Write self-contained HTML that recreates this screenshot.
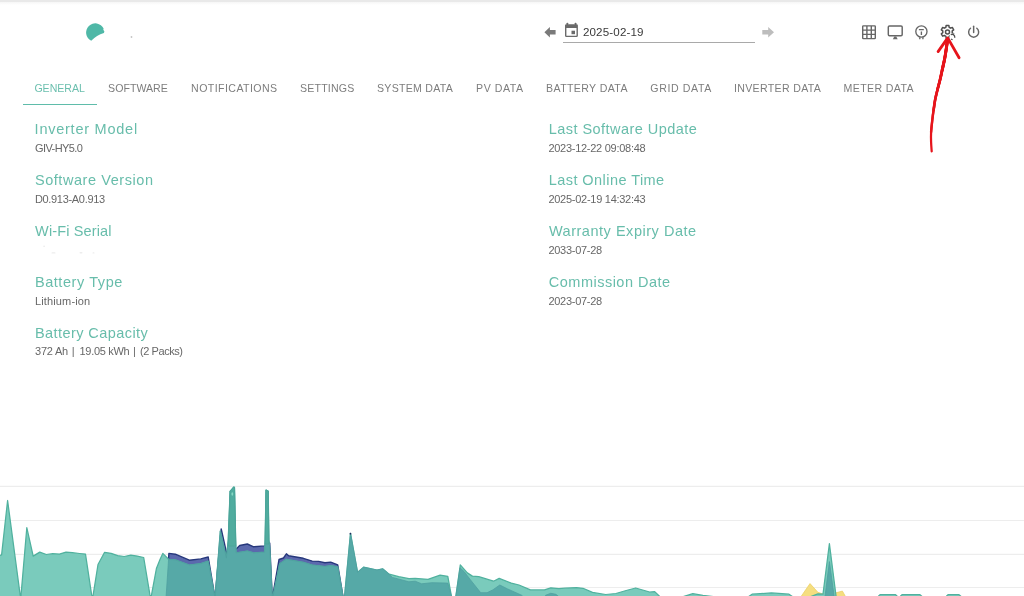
<!DOCTYPE html>
<html><head><meta charset="utf-8"><title>Inverter</title>
<style>
html,body{margin:0;padding:0;background:#fff;}
body{width:1024px;height:596px;position:relative;overflow:hidden;font-family:"Liberation Sans",sans-serif;}
.topbar{position:absolute;left:0;top:0;width:1024px;height:2px;background:#e9e9e9;}
.topbar2{position:absolute;left:0;top:2px;width:1024px;height:3px;background:linear-gradient(#f6f6f6,#fff);}
.t{position:absolute;white-space:pre;line-height:1;}
.txt{position:absolute;left:0;top:0;width:1024px;height:470px;will-change:transform;}
.tab{color:#7d7d7d;}
.tab.act{color:#6bbfae;}
.h{color:#68bdab;}
.v{color:#676767;}
.d{color:#3a3a3a;}
.uline{position:absolute;left:23px;top:103.6px;width:74.3px;height:1.8px;background:#5fbcaa;}
.dline{position:absolute;left:563px;top:42.2px;width:192px;height:1px;background:#a9a9a9;}
.chart{position:absolute;left:0;top:470px;}
.ov{position:absolute;left:0;top:0;}
</style></head><body>
<div class="topbar"></div><div class="topbar2"></div>
<div class="txt">
<span class="t tab act" style="left:34.4px;top:83.0px;font-size:10.6px;letter-spacing:-0.025px">GENERAL</span>
<span class="t tab" style="left:108.1px;top:83.0px;font-size:10.6px;letter-spacing:0.018px">SOFTWARE</span>
<span class="t tab" style="left:191.1px;top:83.0px;font-size:10.6px;letter-spacing:0.419px">NOTIFICATIONS</span>
<span class="t tab" style="left:300.0px;top:83.0px;font-size:10.6px;letter-spacing:0.196px">SETTINGS</span>
<span class="t tab" style="left:377.0px;top:83.0px;font-size:10.6px;letter-spacing:0.251px">SYSTEM DATA</span>
<span class="t tab" style="left:476.0px;top:83.0px;font-size:10.6px;letter-spacing:0.570px">PV DATA</span>
<span class="t tab" style="left:546.1px;top:83.0px;font-size:10.6px;letter-spacing:0.368px">BATTERY DATA</span>
<span class="t tab" style="left:650.3px;top:83.0px;font-size:10.6px;letter-spacing:0.604px">GRID DATA</span>
<span class="t tab" style="left:733.9px;top:83.0px;font-size:10.6px;letter-spacing:0.336px">INVERTER DATA</span>
<span class="t tab" style="left:843.6px;top:83.0px;font-size:10.6px;letter-spacing:0.363px">METER DATA</span>
<span class="t h" style="left:34.6px;top:122.1px;font-size:14.5px;letter-spacing:0.756px">Inverter Model</span>
<span class="t h" style="left:34.9px;top:173.1px;font-size:14.5px;letter-spacing:0.563px">Software Version</span>
<span class="t h" style="left:35.1px;top:224.1px;font-size:14.5px;letter-spacing:0.134px">Wi-Fi Serial</span>
<span class="t h" style="left:34.9px;top:275.0px;font-size:14.5px;letter-spacing:0.573px">Battery Type</span>
<span class="t h" style="left:34.9px;top:325.9px;font-size:14.5px;letter-spacing:0.437px">Battery Capacity</span>
<span class="t h" style="left:548.7px;top:122.1px;font-size:14.5px;letter-spacing:0.456px">Last Software Update</span>
<span class="t h" style="left:548.7px;top:173.1px;font-size:14.5px;letter-spacing:0.446px">Last Online Time</span>
<span class="t h" style="left:548.9px;top:224.1px;font-size:14.5px;letter-spacing:0.524px">Warranty Expiry Date</span>
<span class="t h" style="left:548.8px;top:275.0px;font-size:14.5px;letter-spacing:0.492px">Commission Date</span>
<span class="t v" style="left:35.0px;top:142.7px;font-size:11px;letter-spacing:-0.586px">GIV-HY5.0</span>
<span class="t v" style="left:34.9px;top:193.7px;font-size:11px;letter-spacing:-0.316px">D0.913-A0.913</span>
<span class="t v" style="left:34.9px;top:295.5px;font-size:11px;letter-spacing:0.152px">Lithium-ion</span>
<span class="t v" style="left:35.0px;top:346.3px;font-size:11px;letter-spacing:-0.203px">372 Ah</span>
<span class="t v" style="left:79.5px;top:346.3px;font-size:11px;letter-spacing:-0.305px">19.05 kWh</span>
<span class="t v" style="left:140.0px;top:346.3px;font-size:11px;letter-spacing:-0.431px">(2 Packs)</span>
<span class="t v" style="left:548.4px;top:142.7px;font-size:11px;letter-spacing:-0.271px">2023-12-22 09:08:48</span>
<span class="t v" style="left:548.4px;top:193.7px;font-size:11px;letter-spacing:-0.267px">2025-02-19 14:32:43</span>
<span class="t v" style="left:548.4px;top:244.7px;font-size:11px;letter-spacing:-0.273px">2033-07-28</span>
<span class="t v" style="left:548.4px;top:295.5px;font-size:11px;letter-spacing:-0.273px">2023-07-28</span>
<span class="t d" style="left:582.9px;top:26.4px;font-size:11.6px;letter-spacing:0.149px">2025-02-19</span>
<span class="t v" style="left:71.8px;top:346.1px;font-size:11px">|</span>
<span class="t v" style="left:133.0px;top:346.1px;font-size:11px">|</span>
</div>
<div class="uline"></div>
<div class="dline"></div>
<svg class="chart" width="1024" height="126" viewBox="0 470 1024 126">
<g stroke="#ededed" stroke-width="1.2">
<line x1="0" x2="1024" y1="486.4" y2="486.4"/><line x1="0" x2="1024" y1="520.5" y2="520.5"/><line x1="0" x2="1024" y1="554.3" y2="554.3"/><line x1="0" x2="1024" y1="587.5" y2="587.5"/>
</g>
<polygon points="801.0,596.6 810.0,583.6 817.9,592.3 823.0,594.0 836.0,592.8 842.4,591.1 845.5,596.6" fill="#f5de80" stroke="#ecd06a" stroke-width="0.8" stroke-linejoin="round"/>
<polygon points="166.1,596.6 168.9,553.4 175.3,554.2 189.3,560.2 200.8,558.9 208.2,557.0 214.8,596.6 215.2,596.6 221.2,528.9 226.9,554.4 228.5,553.0 236.5,548.7 239.7,545.5 247.3,544.0 253.7,546.8 264.6,545.9 269.7,543.0 272.2,596.6 272.6,596.6 279.0,559.5 283.5,558.0 286.4,553.8 288.6,555.7 303.3,558.3 312.2,561.1 318.6,561.4 324.9,562.7 330.7,562.1 337.7,564.9 343.0,596.6" fill="#5b69ad" stroke="#27387c" stroke-width="1.4" stroke-linejoin="round"/>
<polygon points="-2.0,596.6 -2.0,555.5 0.0,555.5 1.6,554.9 7.6,500.5 20.1,594.7 20.6,596.6 20.9,596.6 26.8,527.7 33.2,556.1 39.8,552.1 46.3,554.5 52.7,553.7 59.4,554.1 66.0,552.1 72.4,552.7 79.5,553.5 85.5,554.1 91.6,594.7 92.4,596.6 92.9,596.6 98.0,564.5 104.6,552.3 111.1,553.3 117.7,555.7 124.2,556.5 130.8,555.1 137.3,556.1 143.7,557.5 149.9,594.7 150.6,596.6 151.2,596.6 156.4,568.6 160.0,559.5 162.8,553.4 168.6,559.3 175.3,559.9 189.3,565.0 200.8,563.7 208.2,561.2 214.8,596.6 215.2,596.6 220.3,531.0 226.4,558.2 228.2,540.0 230.1,491.1 233.8,487.0 234.5,487.3 235.7,540.0 236.1,552.9 247.3,551.0 253.7,552.9 264.6,552.2 265.1,540.0 266.0,490.0 268.2,491.0 268.9,540.0 269.6,546.0 272.2,596.6 272.9,596.6 279.7,563.7 286.4,559.3 303.3,562.4 312.2,565.0 324.9,566.5 330.7,565.6 337.7,566.9 343.0,596.6 344.5,596.6 350.5,533.4 357.6,572.3 363.6,567.2 377.0,570.0 382.7,568.8 389.1,574.2 398.7,576.7 408.9,578.7 415.2,578.4 428.0,579.3 440.1,575.2 447.8,576.3 451.5,596.6 455.8,596.6 460.3,564.9 467.3,572.9 472.4,576.1 478.8,576.7 493.5,581.2 499.2,578.4 511.3,583.1 519.0,585.0 530.4,589.9 544.5,589.9 550.8,587.8 558.8,588.6 565.0,588.2 576.4,587.6 583.0,588.3 592.5,592.4 605.7,594.5 615.9,593.5 626.2,590.5 635.7,588.0 649.6,592.0 654.7,591.6 659.9,596.6 683.3,596.6 692.8,593.7 702.9,595.4 713.4,596.6 748.6,596.6 752.1,594.2 771.4,592.9 789.0,594.2 792.5,596.6 810.7,596.6 817.9,593.9 823.0,594.2 829.4,543.7 836.1,596.6 878.0,596.6 880.0,594.7 895.6,594.7 897.6,596.6 900.0,596.6 902.0,594.7 920.0,594.7 922.2,596.6 946.0,596.6 948.0,594.7 959.0,594.7 961.3,596.6" fill="#7acbbc" stroke="#50b19e" stroke-width="1.25" stroke-linejoin="round"/>
<polygon points="166.1,596.6 168.6,559.3 175.3,559.9 189.3,565.0 200.8,563.7 208.2,561.2 214.8,596.6 215.2,596.6 220.3,531.0 226.4,558.2 228.2,540.0 230.1,491.1 233.8,487.0 234.5,487.3 235.7,540.0 236.1,552.9 247.3,551.0 253.7,552.9 264.6,552.2 265.1,540.0 266.0,490.0 268.2,491.0 268.9,540.0 269.6,546.0 272.2,596.6 272.9,596.6 279.7,563.7 286.4,559.3 303.3,562.4 312.2,565.0 324.9,566.5 330.7,565.6 337.7,566.9 343.0,596.6 344.5,596.6 350.5,533.4 357.6,572.3 363.6,567.2 377.0,570.0 382.7,568.8 389.1,574.2 392.3,577.4 408.9,581.8 415.2,581.2 421.6,583.8 431.8,582.7 447.8,583.1 451.5,596.6 455.8,596.6 460.0,567.8 464.1,571.6 470.5,579.9 480.7,592.7 487.1,592.7 492.8,589.9 499.8,585.0 507.5,588.9 521.5,595.2 523.0,596.6 545.0,596.6 545.7,595.2 550.8,593.3 555.9,594.3 558.8,596.6 825.0,596.6 829.4,561.6 834.2,596.6" fill="#56a9a7" stroke="#4f9fa0" stroke-width="0.8" stroke-linejoin="round"/>
<polygon points="228.3,546 230.1,491.1 233.8,487 234.5,487.3 235.7,546" fill="#50ac9f" stroke="#4aa597" stroke-width="0.8" stroke-linejoin="round"/>
<polygon points="265.2,544 266,490 268.2,491 268.9,544" fill="#50ac9f" stroke="#4aa597" stroke-width="0.8" stroke-linejoin="round"/>
<ellipse cx="232.3" cy="494" rx="0.9" ry="1.8" fill="#86d8c4"/>
<circle cx="350.45" cy="533.7" r="0.9" fill="#1d2b5c"/>
</svg>
<svg class="ov" width="1024" height="470" viewBox="0 0 1024 470">
<!-- logo -->
<path d="M91.2 40.8 A9.2 9.2 0 1 1 103.6 28.6 L103.3 29.8 L104.4 31.6 L103.9 32.9 Q96.6 35 91.2 40.8 Z" fill="#4fb8a7"/>
<circle cx="131.5" cy="37" r="0.9" fill="#c4c4c4"/>
<!-- left arrow -->
<path d="M544.4 32.2 L549.9 27.1 L549.9 30 L555.6 30 L555.6 34.5 L549.9 34.5 L549.9 37.4 Z" fill="#7a7a7a"/>
<!-- right arrow -->
<path d="M774 32.2 L768.2 27.1 L768.2 30 L762.3 30 L762.3 34.5 L768.2 34.5 L768.2 37.4 Z" fill="#bdbdbd"/>
<!-- calendar -->
<g fill="#6a6a6a">
<rect x="566.6" y="22.8" width="1.5" height="2.6" rx="0.4"/>
<rect x="574.8" y="22.8" width="1.5" height="2.6" rx="0.4"/>
<path d="M566.4 24.2 h10.1 a1.4 1.4 0 0 1 1.4 1.4 v10.1 a1.4 1.4 0 0 1 -1.4 1.4 h-10.1 a1.4 1.4 0 0 1 -1.4 -1.4 v-10.1 a1.4 1.4 0 0 1 1.4 -1.4 Z M566.4 28 v7.7 h10.1 v-7.7 Z" fill-rule="evenodd"/>
<rect x="571.5" y="30.7" width="3.5" height="3.5"/>
</g>
<!-- grid icon -->
<g fill="none" stroke="#666" stroke-width="1.4">
<rect x="862.7" y="25.9" width="12.6" height="12.7" rx="0.7"/>
<path d="M866.9 25.9 v12.7 M871.3 25.9 v12.7 M862.7 30.1 h12.6 M862.7 34.4 h12.6"/>
</g>
<!-- monitor -->
<g fill="none" stroke="#666" stroke-width="1.45">
<rect x="888.3" y="25.9" width="13.9" height="9.9" rx="1.2"/>
<path d="M894.3 36.4 L896.2 36.4 L897.7 39.3 L892.8 39.3 Z" fill="#6a6a6a" stroke="none"/>
</g>
<!-- meter -->
<g fill="none" stroke="#666" stroke-width="1.35">
<circle cx="921.4" cy="31.45" r="5.6"/>
<path d="M918.9 29.6 h4.9 M921.4 31.6 v3.3 M919.8 37.2 v2 M922.9 37.2 v2"/>
</g>
<!-- gear -->
<g fill="none" stroke="#505050" stroke-width="1.5" stroke-linejoin="round">
<path d="M945.90 27.27 L946.15 25.44 L948.85 25.44 L949.10 27.27 L950.62 28.15 L952.33 27.45 L953.68 29.79 L952.22 30.92 L952.22 32.68 L953.68 33.81 L952.33 36.15 L950.62 35.45 L949.10 36.33 L948.85 38.16 L946.15 38.16 L945.90 36.33 L944.38 35.45 L942.67 36.15 L941.32 33.81 L942.78 32.68 L942.78 30.92 L941.32 29.79 L942.67 27.45 L944.38 28.15 Z"/>
<circle cx="947.5" cy="32.1" r="2.0"/>
<circle cx="952.9" cy="37" r="3.4" fill="#fff" stroke="none"/>
<path d="M950.8 34.6 Q953.2 33.4 954.5 35.9 Q954.9 36.9 954.6 37.8" stroke-width="1.3"/>
<path d="M951.2 38.8 Q951.8 39.5 952.6 39.7" stroke-width="1.3"/>
</g>
<!-- power -->
<g fill="none" stroke="#666" stroke-width="1.45" stroke-linecap="round">
<path d="M970.5 28.3 A5 5 0 1 0 976.8 28.3"/>
<path d="M973.65 26.3 V32.4"/>
</g>
<!-- red arrow -->
<g fill="none" stroke="#e6141b" stroke-linecap="round" stroke-linejoin="round">
<path d="M931.7 151.4 C931.6 149.9 931.2 145.5 931.1 142.3 C931.0 139.1 930.9 136.0 931.1 132.3 C931.3 128.6 931.9 123.7 932.3 120.0 C932.7 116.3 933.1 113.3 933.6 110.0 C934.1 106.7 934.5 103.3 935.1 100.0 C935.7 96.7 936.6 93.3 937.4 90.0 C938.2 86.7 939.2 83.3 940.0 80.0 C940.8 76.7 941.4 73.7 942.2 70.0 C943.0 66.3 943.9 62.8 944.8 58.0 C945.7 53.2 947.0 43.8 947.4 41.0" stroke-width="2.25"/>
<path d="M931.1 132.3 C931.3 128.6 931.9 123.7 932.3 120.0 C932.7 116.3 933.1 113.3 933.6 110.0 C934.1 106.7 934.5 103.3 935.1 100.0 C935.7 96.7 936.6 93.3 937.4 90.0 C938.2 86.7 939.2 83.3 940.0 80.0 C940.8 76.7 941.4 73.7 942.2 70.0 C943.0 66.3 943.9 62.8 944.8 58.0 C945.7 53.2 947.0 43.8 947.4 41.0" stroke-width="2.45"/>
<path d="M933.6 110.0 C934.1 106.7 934.5 103.3 935.1 100.0 C935.7 96.7 936.6 93.3 937.4 90.0 C938.2 86.7 939.2 83.3 940.0 80.0 C940.8 76.7 941.4 73.7 942.2 70.0 C943.0 66.3 943.9 62.8 944.8 58.0 C945.7 53.2 947.0 43.8 947.4 41.0" stroke-width="2.65"/>
<path d="M937.4 90.0 C938.2 86.7 939.2 83.3 940.0 80.0 C940.8 76.7 941.4 73.7 942.2 70.0 C943.0 66.3 943.9 62.8 944.8 58.0 C945.7 53.2 947.0 43.8 947.4 41.0" stroke-width="2.85"/>
<path d="M942.2 70.0 C943.0 66.3 943.9 62.8 944.8 58.0 C945.7 53.2 947.0 43.8 947.4 41.0" stroke-width="3"/>
<path d="M938.1 51.6 L947.7 37.9 L959.1 57.7" stroke-width="2.8"/>
</g>
<!-- smudge (redacted serial) -->
<g fill="#ededed"><rect x="51.5" y="252.3" width="4" height="1.2" rx="0.6"/><rect x="79.5" y="252" width="3" height="1.6" rx="0.8"/><rect x="92.5" y="252.3" width="2" height="1.2" rx="0.6"/><rect x="43.3" y="245.6" width="1.6" height="1.4" rx="0.6"/></g>

</svg>
</body></html>
